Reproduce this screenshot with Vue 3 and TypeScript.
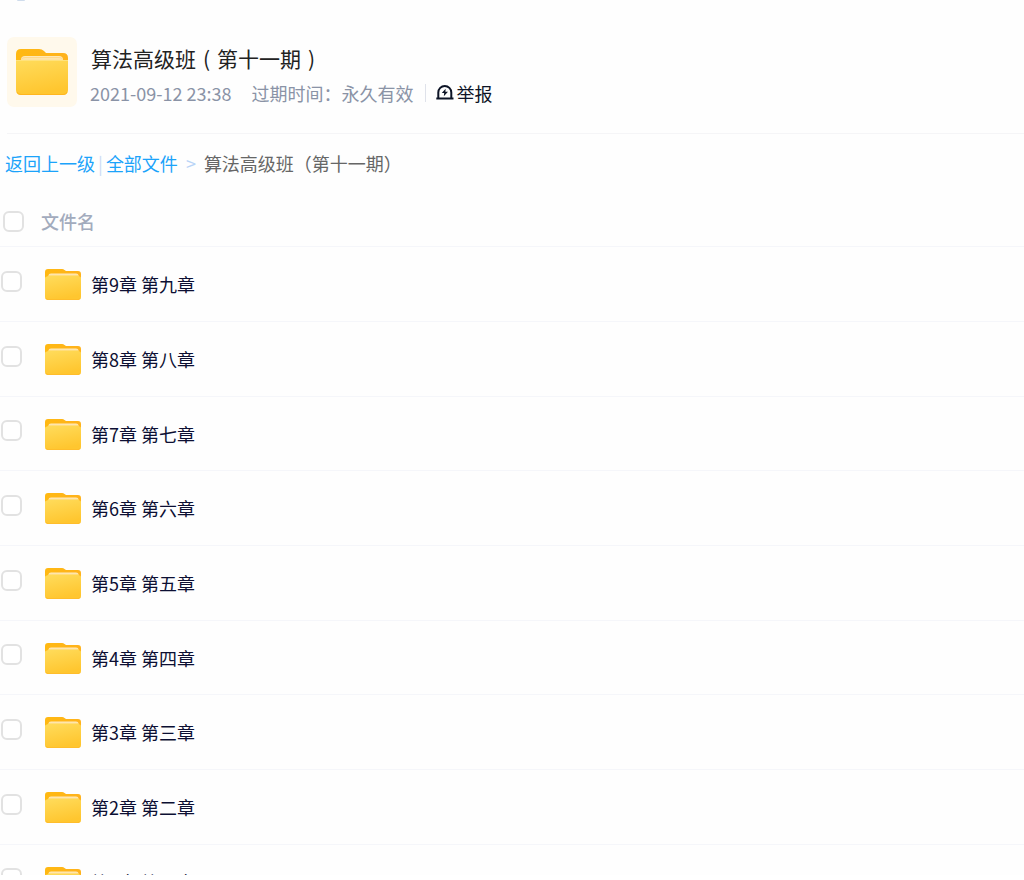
<script setup lang="ts">
import { ref, computed } from 'vue'

interface Folder {
  id: number
  name: string
}

const numerals = ['一', '二', '三', '四', '五', '六', '七', '八', '九']

const folders: Folder[] = numerals
  .map((n, i) => ({ id: i + 1, name: `第${i + 1}章 第${n}章` }))
  .reverse()

const selected = ref<number[]>([])

const allSelected = computed<boolean>({
  get: () => selected.value.length === folders.length,
  set: (on) => {
    selected.value = on ? folders.map((f) => f.id) : []
  },
})
</script>

<template>
  <main class="page">
    <svg class="defs" width="0" height="0" aria-hidden="true">
      <defs>
        <linearGradient id="folder-front" x1="0" y1="0" x2="0.3" y2="1">
          <stop offset="0" stop-color="#ffdc5c" />
          <stop offset="1" stop-color="#ffc62f" />
        </linearGradient>
        <linearGradient id="folder-back" x1="0" y1="0" x2="1" y2="0">
          <stop offset="0" stop-color="#ffb912" />
          <stop offset="1" stop-color="#ffb21c" />
        </linearGradient>
        <linearGradient id="folder-paper" x1="0" y1="0" x2="0" y2="1">
          <stop offset="0" stop-color="#ffe9b8" />
          <stop offset="1" stop-color="#ffd272" />
        </linearGradient>
      </defs>
    </svg>

    <div class="topbar" aria-hidden="true"><span class="topbar-dot"></span></div>

    <header class="share">
      <div class="share-icon">
        <svg viewBox="0 0 54 48" width="54" height="48" aria-hidden="true">
          <path d="M1 6Q1 1 6 1H24Q27 1 29 3L31 5H48Q53 5 53 10V24H1Z" fill="url(#folder-back)" />
          <path d="M6 20V11.500Q6 8 10 8H44Q48 8 48 11.500V20Z" fill="url(#folder-paper)" />
          <path d="M6.500 11Q8 9.500 10 9.500H44Q46 9.500 47.500 11" fill="none" stroke="#ffd88a" stroke-width="1" />
          <path d="M1 12H53V42Q53 47 48 47H6Q1 47 1 42Z" fill="url(#folder-front)" />
          <path d="M1 12.500H53" stroke="#ffe27c" stroke-width="1" />
          <path d="M2 44Q3 46.500 6 46.500H48Q51 46.500 52 44" fill="none" stroke="#ffb61f" stroke-width="1" />
        </svg>
      </div>
      <div class="share-text">
        <h1>算法高级班<span class="paren">(</span>第十一期<span class="paren">)</span></h1>
        <div class="meta">
          <time datetime="2021-09-12T23:38">2021-09-12 23:38</time>
          <span class="expiry">过期时间：永久有效</span>
          <button type="button" class="report">
            <svg viewBox="0 0 18 18" width="18" height="18" aria-hidden="true">
              <path d="M2.300 14V8.500A6.500 6.500 0 0 1 15.300 8.500V14" fill="none" stroke="#0d1426" stroke-width="2" />
              <path d="M0.300 14.500H17.500" stroke="#0d1426" stroke-width="2" />
              <path d="M9.600 4.800L5.800 9H8.200L7.800 12.200L12 7.800H9.400Z" fill="#0d1426" />
            </svg>
            举报
          </button>
        </div>
      </div>
    </header>

    <nav class="crumbs" aria-label="路径">
      <a href="#up">返回上一级</a>
      <span class="bar">|</span>
      <a href="#all">全部文件</a>
      <span class="arrow">&gt;</span>
      <span class="current">算法高级班（第十一期）</span>
    </nav>

    <table class="files">
      <thead>
        <tr>
          <th class="check"><input v-model="allSelected" type="checkbox" aria-label="全选" /></th>
          <th class="name" scope="col">文件名</th>
        </tr>
      </thead>
      <tbody>
        <tr v-for="f in folders" :key="f.id">
          <td class="check">
            <input :id="`file-${f.id}`" v-model="selected" type="checkbox" :value="f.id" />
          </td>
          <td class="name">
            <label class="file" :for="`file-${f.id}`">
              <svg viewBox="0 0 36 32" width="36" height="32" aria-hidden="true">
                <path d="M0 4Q0 1 3 1H17Q18.500 1 19.500 2L21 3H33Q36 3 36 6V16H0Z" fill="url(#folder-back)" />
                <path d="M3.500 12V7.500Q3.500 5.500 6 5.500H31Q33.500 5.500 33.500 7.500V12Z" fill="url(#folder-paper)" />
                <path d="M0 10Q0 8.500 2 8.500L4 7.500H33L34.500 8.500Q36 8.500 36 10V29Q36 32 33 32H3Q0 32 0 29Z" fill="url(#folder-front)" />
                <path d="M1 30Q1.500 31.500 3 31.500H33Q34.500 31.500 35 30" fill="none" stroke="#ffbd2b" stroke-width="1" />
              </svg>
              <span>{{ f.name }}</span>
            </label>
          </td>
        </tr>
      </tbody>
    </table>
  </main>
</template>

<style>
body {
  margin: 0;
  background: #fff;
}
</style>

<style scoped>
.page {
  height: calc(100vh - 5px);
  overflow: hidden;
  background: #fefefe;
  font-family: 'Noto Sans CJK SC', sans-serif;
  font-size: 18px;
  line-height: 26px;
}

.defs {
  position: absolute;
}

.topbar {
  height: 37px;
  padding-left: 17px;
}

.topbar-dot {
  display: block;
  width: 8px;
  height: 1px;
  border-radius: 0 0 4px 4px;
  background: #cfdcec;
}

.share {
  display: flex;
  gap: 13px;
  margin-left: 7px;
  padding-bottom: 26px;
  border-bottom: 1px solid #f5f5f7;
}

.share-icon {
  display: flex;
  align-items: center;
  justify-content: center;
  width: 70px;
  height: 70px;
  border-radius: 7px;
  background: #fff9ec;
}

.share-text {
  padding-top: 5px;
}

h1 {
  margin: 0;
  padding-left: 1px;
  color: #222;
  font-size: 21px;
  font-weight: 400;
  line-height: 32px;
}

.paren {
  padding: 0 7px;
}

.meta {
  display: flex;
  align-items: center;
  margin-top: 6px;
  color: #8a93a6;
  white-space: nowrap;
}

.expiry {
  margin-left: 20px;
}

.report {
  display: flex;
  align-items: center;
  gap: 2px;
  height: 18px;
  margin-left: 12px;
  padding: 0 0 0 10px;
  border: 0;
  border-left: 1px solid #dfe2ea;
  background: none;
  color: #0d1426;
  font: inherit;
  cursor: pointer;
}

.crumbs {
  display: flex;
  align-items: center;
  padding: 16px 0 0 5px;
  white-space: nowrap;
}

.crumbs a {
  color: #1ba3fa;
  text-decoration: none;
}

.bar {
  padding: 0 3px;
  color: #cddcf5;
}

.arrow {
  padding: 0 8px;
  color: #b9d4f7;
}

.current {
  color: #666;
}

.files {
  width: 100%;
  margin-top: 20px;
  border-collapse: collapse;
}

.files th,
.files td {
  height: 74px;
  padding: 0;
  border-bottom: 1px solid #f5f6fa;
  text-align: left;
}

.files tbody tr:nth-child(3n) td {
  height: 73px;
}

.files thead th {
  height: 50px;
  color: #a2abbd;
  font-weight: 500;
}

.files .check {
  width: 41px;
}

.check input {
  display: block;
  appearance: none;
  box-sizing: border-box;
  width: 21px;
  height: 21px;
  margin: 0 0 6px 1px;
  border: 2px solid #e2e2e2;
  border-radius: 6px;
  background: #fff;
}

.check input:checked {
  border-color: #1ba3fa;
  background: #1ba3fa;
}

thead .check input {
  margin: 0 0 0 3px;
}

.file {
  display: flex;
  align-items: center;
  gap: 10px;
  margin-left: 4px;
  color: #0c0f33;
}
</style>
